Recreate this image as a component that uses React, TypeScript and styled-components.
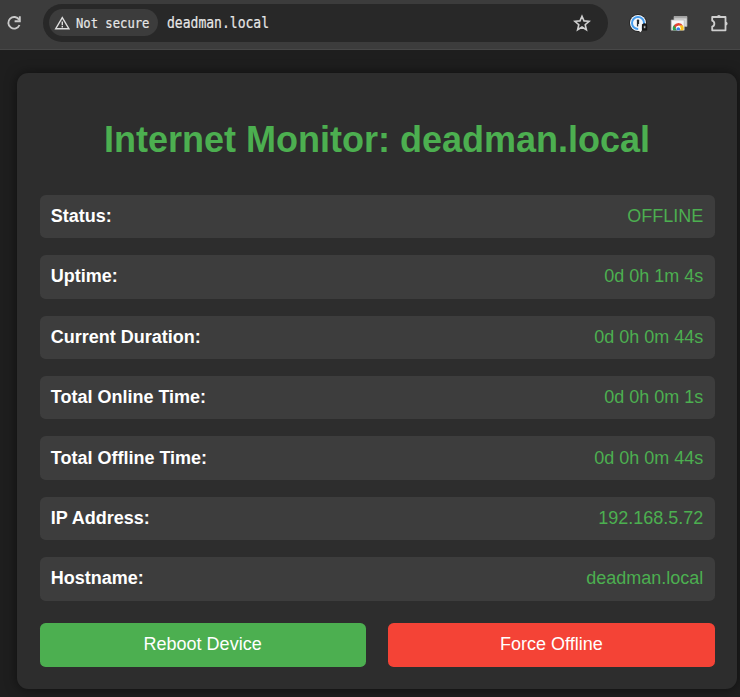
import React from 'react';
import styled, { createGlobalStyle } from 'styled-components';

const GlobalStyle = createGlobalStyle`
  * { box-sizing: border-box; }
  html, body { margin: 0; padding: 0; background: #1e1e1e; }
  body { overflow: hidden; font-family: "Liberation Sans", Arial, sans-serif; }
`;

const Page = styled.div`
  width: 740px;
  height: 697px;
  overflow: hidden;
  background: #1e1e1e;
`;

const Toolbar = styled.header`
  display: flex;
  align-items: center;
  height: 50px;
  padding: 0 10px 4px 5px;
  background: #3c3c3c;
  border-bottom: 1px solid #484848;
`;

const AddressBar = styled.div`
  display: flex;
  align-items: center;
  width: 565px;
  height: 38px;
  margin-left: 20px;
  padding: 0 17px 0 6px;
  border-radius: 19px;
  background: #282828;
`;

const SecurityChip = styled.div`
  display: flex;
  align-items: center;
  width: 109px;
  height: 27px;
  padding-left: 5px;
  border-radius: 14px;
  background: #3c3c3c;
`;

const MonoText = styled.span<{ $size: number; $stretch: number }>`
  display: block;
  width: 0;
  padding-top: 1px;
  white-space: pre;
  font-family: "DejaVu Sans Mono", monospace;
  font-size: ${(p) => p.$size}px;
  line-height: 20px;
  color: #e6e6e6;
  -webkit-text-stroke: 0.2px #e6e6e6;
  transform: scaleX(${(p) => p.$stretch});
  transform-origin: 0 50%;
`;

const ChipLabel = styled.div`
  margin-left: 5px;
`;

const Url = styled.div`
  flex: 1;
  margin-left: 9px;
`;

const Extensions = styled.div`
  display: flex;
  align-items: center;
  gap: 20.5px;
  margin-left: 21.5px;
`;

const Icon = styled.svg`
  display: block;
  flex: none;
`;

const Card = styled.main`
  width: 720px;
  height: 616px;
  margin: 23px 0 0 17px;
  padding: 46px 22.5px 0;
  border-radius: 11.25px;
  background: #2d2d2d;
  box-shadow: 0 0 11.25px rgba(0, 0, 0, 0.5);
`;

const Title = styled.h1`
  margin: 0 0 34.85px;
  font-size: 36px;
  line-height: 41px;
  font-weight: 700;
  text-align: center;
  color: #4caf50;
`;

const StatusList = styled.div`
  display: flex;
  flex-direction: column;
  gap: 16.875px;
`;

const StatusRow = styled.div`
  display: flex;
  justify-content: space-between;
  align-items: center;
  height: 43.5px;
  padding: 0 11.25px;
  border-radius: 5.6px;
  background: #3d3d3d;
  font-size: 18px;
  line-height: 21px;
`;

const Label = styled.span`
  font-weight: 700;
  color: #fff;
`;

const Value = styled.span`
  color: #4caf50;
`;

const Actions = styled.div`
  display: grid;
  grid-template-columns: 1fr 1fr;
  gap: 22.5px;
  margin-top: 22.4px;
`;

const ActionButton = styled.button<{ $color: string }>`
  height: 44px;
  padding: 0 0 1px;
  border: 0;
  border-radius: 5.6px;
  background: ${(p) => p.$color};
  color: #fff;
  font: 18px/21px "Liberation Sans", Arial, sans-serif;
`;

const rows = [
  ['Status:', 'OFFLINE'],
  ['Uptime:', '0d 0h 1m 4s'],
  ['Current Duration:', '0d 0h 0m 44s'],
  ['Total Online Time:', '0d 0h 0m 1s'],
  ['Total Offline Time:', '0d 0h 0m 44s'],
  ['IP Address:', '192.168.5.72'],
  ['Hostname:', 'deadman.local'],
];

const ReloadIcon = () => (
  <Icon width="18" height="18" viewBox="0 0 18 18" fill="none" stroke="#cacaca" strokeWidth="1.9">
    <path d="M14.1 5.8A5.8 5.8 0 1 0 14.5 11" />
    <path d="M14.8 2.2v5.1H9.6" />
  </Icon>
);

const WarningIcon = () => (
  <Icon width="17" height="16" viewBox="0 0 17 16" fill="none" stroke="#dedede" strokeWidth="1.4">
    <path d="M8.3 2.6 1.7 13.7h13.2z" />
    <path d="M8.3 6.4v3.8M8.3 11v1.4" />
  </Icon>
);

const StarIcon = () => (
  <Icon width="18" height="18" viewBox="0 0 18 18" fill="none" stroke="#cfcfcf" strokeWidth="1.6">
    <path d="m9 2.2 2 4.7 5.1.4-3.9 3.4 1.2 5L9 13l-4.4 2.7 1.2-5-3.9-3.4 5.1-.4z" />
  </Icon>
);

const PasswordIcon = () => (
  <Icon width="20" height="20" viewBox="0 0 20 20">
    <circle cx="9" cy="10" r="8.9" fill="#252525" />
    <circle cx="9" cy="10" r="8" fill="#f5f7fa" />
    <circle cx="9" cy="10" r="6" fill="#f5f7fa" stroke="#459cee" strokeWidth="2" />
    <rect x="7.9" y="6.5" width="2.2" height="7" rx=".7" fill="#252a31" />
    <path d="M12.6 11.2h7v8h-7z" fill="#3c3c3c" />
    <path d="M9.2 10.9h3.6v6.7l-1.2 1.7-2.4-1.7z" fill="#f7f7f7" />
    <path d="M13.8 14v-1.1a1.8 1.8 0 0 1 3.6 0V14" fill="none" stroke="#171717" strokeWidth="1.6" />
    <rect x="13" y="13.8" width="5.2" height="3.6" rx=".5" fill="#171717" />
    <path d="M14.8 13.2h1.6v2h-1.6z" fill="#bcbcbc" />
  </Icon>
);

const WindowsIcon = () => (
  <Icon width="20" height="20" viewBox="0 0 20 20">
    <path d="M4 3.5h13v10H4z" fill="#d7d7d7" stroke="#aaa" strokeWidth=".7" />
    <path d="M4 3.9h13v1.5H4z" fill="#a8a8a8" />
    <path d="M1.2 7h13v10.2h-13z" fill="#f6f6f6" stroke="#b4b4b4" strokeWidth=".7" />
    <path d="M3.1 17.2a5 5 0 0 1 2-5.9l2 4-.7 1.9z" fill="#2ba24c" />
    <path d="M4 12.7a5 5 0 0 1 9 0H8.2L6 15.3z" fill="#e34133" />
    <path d="M9 12.6h4a5 5 0 0 1 .2 4.6H9.5z" fill="#fbc116" />
    <circle cx="8.3" cy="15.2" r="2.4" fill="#fff" />
    <path d="M6.7 17.2a1.9 1.9 0 1 1 3.2 0z" fill="#397ee7" />
  </Icon>
);

const PuzzleIcon = () => (
  <Icon width="20" height="20" viewBox="0 0 20 20" fill="none" stroke="#cfcfcf" strokeWidth="1.8">
    <path d="M2.2 4h13.3v13.3H2.2v-3.7a3.1 3.1 0 0 0 0-5.9z" strokeLinejoin="round" />
    <path d="M7 3.8a1.9 1.9 0 0 1 3.8 0zM15.7 8.7a1.9 1.9 0 0 1 0 3.8z" fill="#cfcfcf" stroke="none" />
  </Icon>
);

export default function App() {
  return (
    <Page>
      <GlobalStyle />
      <Toolbar>
        <ReloadIcon />
        <AddressBar>
          <SecurityChip>
            <WarningIcon />
            <ChipLabel>
              <MonoText $size={14.5} $stretch={0.841}>Not secure</MonoText>
            </ChipLabel>
          </SecurityChip>
          <Url>
            <MonoText $size={16} $stretch={0.815}>deadman.local</MonoText>
          </Url>
          <StarIcon />
        </AddressBar>
        <Extensions>
          <PasswordIcon />
          <WindowsIcon />
          <PuzzleIcon />
        </Extensions>
      </Toolbar>
      <Card>
        <Title>Internet Monitor: deadman.local</Title>
        <StatusList>
          {rows.map(([label, value]) => (
            <StatusRow key={label}>
              <Label>{label}</Label>
              <Value>{value}</Value>
            </StatusRow>
          ))}
        </StatusList>
        <Actions>
          <ActionButton $color="#4caf50">Reboot Device</ActionButton>
          <ActionButton $color="#f44336">Force Offline</ActionButton>
        </Actions>
      </Card>
    </Page>
  );
}
